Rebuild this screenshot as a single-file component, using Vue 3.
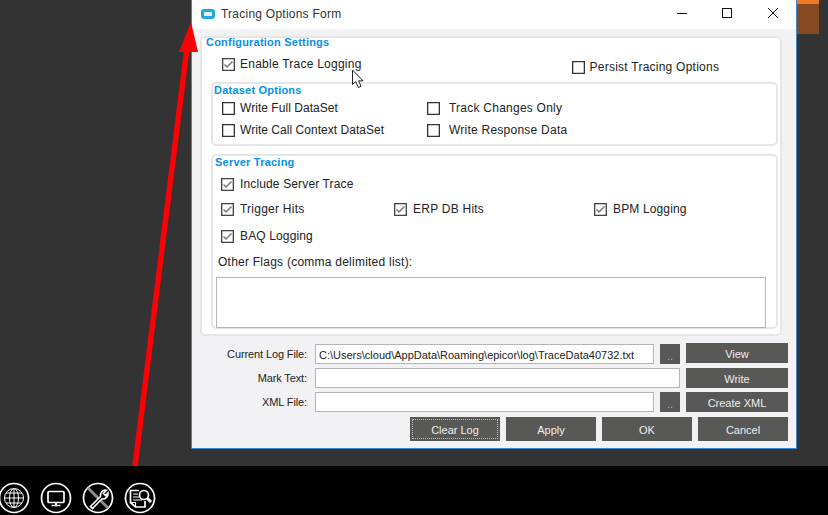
<script setup>
const datasetOptions = [
  { label: 'Write Full DataSet' },
  { label: 'Track Changes Only' },
  { label: 'Write Call Context DataSet' },
  { label: 'Write Response Data' }
]
const hits = [
  { label: 'Trigger Hits', cls: 'c1' },
  { label: 'ERP DB Hits', cls: 'c2' },
  { label: 'BPM Logging', cls: 'c3' }
]
const actions = ['Clear Log', 'Apply', 'OK', 'Cancel']
</script>

<template>
  <div class="desktop">
    <div class="chip"><div class="chip-top"></div></div>

    <section class="window">
      <header class="titlebar">
        <span class="app-icon"></span>
        <span class="title">Tracing Options Form</span>
        <svg class="winctl" width="150" height="30" viewBox="0 0 150 30">
          <path d="M59 13.500H69" stroke="#111" fill="none" />
          <rect x="104.500" y="8.500" width="9" height="9" stroke="#111" fill="none" />
          <path d="M150 8L160 18M160 8L150 18" stroke="#111" fill="none" />
        </svg>
      </header>

      <div class="client">
        <fieldset class="group config">
          <div class="legend">Configuration Settings</div>
          <div class="config-row">
            <label class="check enable"><i class="box on"><svg width="11" height="11" viewBox="0 0 11 11"><path d="M1.500 5.500L4 8L9.500 2.500" /></svg></i>Enable Trace Logging</label>
            <label class="check persist"><i class="box"></i>Persist Tracing Options</label>
          </div>

          <fieldset class="group inner dataset">
            <div class="legend">Dataset Options</div>
            <div class="dataset-grid">
              <label v-for="o in datasetOptions" :key="o.label" class="check"><i class="box"></i>{{ o.label }}</label>
            </div>
          </fieldset>

          <fieldset class="group inner server">
            <div class="legend">Server Tracing</div>
            <label class="check include"><i class="box on"><svg width="11" height="11" viewBox="0 0 11 11"><path d="M1.500 5.500L4 8L9.500 2.500" /></svg></i>Include Server Trace</label>
            <div class="hits">
              <label v-for="h in hits" :key="h.label" class="check" :class="h.cls"><i class="box on"><svg width="11" height="11" viewBox="0 0 11 11"><path d="M1.500 5.500L4 8L9.500 2.500" /></svg></i>{{ h.label }}</label>
            </div>
            <label class="check baq"><i class="box on"><svg width="11" height="11" viewBox="0 0 11 11"><path d="M1.500 5.500L4 8L9.500 2.500" /></svg></i>BAQ Logging</label>
            <div class="flags-label">Other Flags (comma delimited list):</div>
            <div class="flags"></div>
          </fieldset>
        </fieldset>

        <div class="file-rows">
          <div class="file-row first">
            <span class="lbl">Current Log File:</span>
            <div class="field short">C:\Users\cloud\AppData\Roaming\epicor\log\TraceData40732.txt</div>
            <button class="btn dots">..</button>
            <button class="btn side up">View</button>
          </div>
          <div class="file-row second">
            <span class="lbl">Mark Text:</span>
            <div class="field long"></div>
            <button class="btn side">Write</button>
          </div>
          <div class="file-row third">
            <span class="lbl">XML File:</span>
            <div class="field short"></div>
            <button class="btn dots">..</button>
            <button class="btn side">Create XML</button>
          </div>
        </div>

        <div class="actions">
          <button v-for="(a, i) in actions" :key="a" class="btn action" :class="{ focused: i === 0 }"><span>{{ a }}</span></button>
        </div>
      </div>
    </section>

    <svg class="cursor" width="14" height="20" viewBox="0 0 14 20">
      <path d="M1.500 1V15.500L4.800 12.500L7.300 18.500L10 17.300L7.500 11.800H12Z" fill="#fff" stroke="#222" stroke-width="1" />
    </svg>

    <svg class="arrow" width="70" height="450" viewBox="0 0 70 450">
      <path d="M5 446L57 28" stroke="#fb0007" stroke-width="5.500" fill="none" />
      <path d="M61 2L68 32L49 32Z" fill="#fb0007" />
    </svg>

    <footer class="taskbar">
      <svg class="tb" width="32" height="32" viewBox="0 0 32 32">
        <circle cx="16" cy="16" r="14.500" />
        <g class="thin">
          <circle cx="16" cy="16" r="9.500" />
          <ellipse cx="16" cy="16" rx="4.500" ry="9.500" />
          <path d="M16 6.500V25.500M6.500 16H25.500M8 11H24M8 21H24" />
        </g>
      </svg>
      <svg class="tb" width="32" height="32" viewBox="0 0 32 32">
        <circle cx="16" cy="16" r="14.500" />
        <rect x="8" y="9.500" width="16" height="11" rx="1" />
        <path d="M16 20.500V23M11.500 23.500H20.500" />
      </svg>
      <svg class="tb" width="32" height="32" viewBox="0 0 32 32">
        <circle cx="16" cy="16" r="14.500" />
        <path d="M6 6L26 26" stroke="#8c8c8c" stroke-width="3" />
        <path d="M8.500 24.500L18.500 14.500C18 11 20.500 7.500 24.500 8.300L21.500 11.300L23.500 13.500L26 10.800C26.500 14.800 23 17.500 20 16.800L10.500 26.500Z" fill="#000" stroke="#fff" stroke-width="1.600" />
      </svg>
      <svg class="tb" width="32" height="32" viewBox="0 0 32 32">
        <circle cx="16" cy="16" r="14.500" />
        <path d="M15 8.500H6.500V20.500L11.500 25H21V19" />
        <path d="M6.500 20.500H11.500V25M9 12H14M9 15H15M9 18H18" stroke-width="1.200" />
        <circle cx="20" cy="13" r="4.500" />
        <path d="M23.500 16.500L27 20" stroke-width="3" />
      </svg>
    </footer>
  </div>
</template>

<style>
html, body { margin: 0; background: #333; }
</style>

<style scoped>
.desktop {
  position: relative;
  width: 828px;
  height: 515px;
  overflow: hidden;
  background: #333333;
  display: flex;
  flex-direction: column;
  justify-content: flex-end;
  font-family: "Liberation Sans", Arial, sans-serif;
  font-size: 12px;
  letter-spacing: 0.24px;
  color: #222;
}
.chip {
  position: absolute;
  left: 797px;
  top: 0;
  width: 22px;
  height: 34px;
  background: #854a22;
}
.chip-top { height: 4px; background: #f07a20; }

.window {
  position: absolute;
  left: 191px;
  top: 0;
  width: 604px;
  height: 448px;
  background: #f2f2f5;
  border: 1px solid #3f86cc;
  border-top: 0;
  display: flex;
  flex-direction: column;
}
.titlebar {
  height: 29px;
  flex: none;
  background: #fff;
  display: flex;
  align-items: center;
  padding-left: 9px;
  position: relative;
}
.app-icon {
  width: 14px;
  height: 10px;
  box-sizing: border-box;
  border: 3px solid #22a7dc;
  border-radius: 3px;
  background: #dff3fa;
  margin-top: -2px;
}
.title { margin-left: 6px; color: #333; margin-top: -1px; }
.winctl { position: absolute; left: 426px; top: 0; overflow: visible; display: block; }

.client { flex: 1; padding: 7px 8px 0; position: relative; }
.group { margin: 0; padding: 0; min-width: 0; }
fieldset.group {
  box-sizing: border-box;
  background: #fff;
  border: 2px solid #e6e6e8;
  border-radius: 5px;
}
.legend {
  font-weight: 700;
  font-size: 11px;
  letter-spacing: 0.22px;
  color: #0a8fe6;
  line-height: 12px;
}
.config { width: 582px; height: 300px; padding: 0 4px 0 9px; }
.config > .legend { margin-left: -5px; margin-top: -2px; }
.inner > .legend { margin-left: -1px; }

.config-row { display: flex; height: 32px; margin-top: 2px; }
.enable { margin: 7px 0 0 11px; }
.persist { margin: 10px 0 0 210px; }

.check { display: flex; align-items: center; white-space: nowrap; height: 14px; }
.box {
  flex: none;
  box-sizing: border-box;
  width: 13px;
  height: 13px;
  border: 1px solid #333;
  box-shadow: inset 0 0 0 0.3px #333;
  background: #fff;
  margin-right: 5px;
  display: inline-flex;
  align-items: center;
  justify-content: center;
}
.box.on { border-color: #444; }
.box svg { display: block; }
.box path { fill: none; stroke: #777; stroke-width: 1.500; }

.inner { width: 567px; }
.dataset { height: 64px; padding: 0 0 0 2px; }
.dataset-grid {
  display: grid;
  grid-template-columns: 205px 1fr;
  row-gap: 8px;
  padding: 5px 0 0 7px;
}
.dataset-grid .check:nth-child(odd) { letter-spacing: 0.04px; }
.dataset-grid .check:nth-child(even) .box { margin-right: 9px; }

.server { height: 175px; margin-top: 8px; padding: 0 0 0 3px; }
.server .box { margin-right: 6px; }
.include { margin: 9px 0 0 5px; letter-spacing: 0.14px; }
.hits { display: flex; margin: 11px 0 0 5px; height: 14px; }
.hits .check.c1 { width: 173px; }
.hits .check.c2 { width: 200px; }
.hits .check.c3 { letter-spacing: 0.14px; }
.baq { margin: 13px 0 0 5px; letter-spacing: 0.14px; }
.flags-label { margin: 12px 0 0 2px; line-height: 14px; }
.flags {
  box-sizing: border-box;
  width: 550px;
  height: 51px;
  margin: 8px 0 0 0;
  background: #fff;
  border: 1px solid #b4b4b4;
}

.file-rows { margin-top: 8px; }
.file-row { display: flex; align-items: flex-start; height: 24px; }
.lbl { width: 107px; text-align: right; padding-top: 3px; line-height: 14px; font-size: 11px; letter-spacing: -0.12px; color: #222; flex: none; }
.field {
  box-sizing: border-box;
  height: 20px;
  margin-left: 8px;
  background: #fff;
  border: 1px solid #b4b4b4;
  flex: none;
  padding: 1px 0 0 3px;
  line-height: 18px;
  font-size: 11px;
  letter-spacing: 0;
  overflow: hidden;
  white-space: nowrap;
}
.field.short { width: 339px; }
.field.long { width: 365px; }
.btn {
  border: 0;
  padding: 2px 0 0;
  margin: 0;
  background: #585856;
  color: #eee;
  font: inherit;
  font-size: 11px;
  letter-spacing: 0;
  flex: none;
  display: block;
}
.dots { width: 20px; height: 20px; margin-left: 6px; padding-top: 4px; color: #aaa; }
.side { width: 102px; height: 20px; margin: 0 0 0 6px; }
.side.up { margin-top: -1px; }

.actions { display: flex; gap: 6px; margin-top: 1px; padding-left: 210px; }
.action { width: 90px; height: 24px; }
.action span { display: block; }
.focused { padding: 2px; }
.focused span {
  display: flex;
  box-sizing: border-box;
  width: 100%;
  height: 100%;
  padding-top: 2px;
  align-items: center;
  justify-content: center;
  border: 1px dotted #bbb;
}

.cursor { position: absolute; left: 351px; top: 69px; }
.arrow { position: absolute; left: 130px; top: 20px; overflow: visible; }

.taskbar {
  height: 49px;
  flex: none;
  background: #000;
  display: flex;
  gap: 10px;
  padding: 16px 0 0 0;
  box-sizing: border-box;
}
.tb { flex: none; fill: none; stroke: #fff; stroke-width: 1.700; }
.tb:first-child { margin-left: -2px; }
.tb .thin { stroke-width: 1; }
</style>
